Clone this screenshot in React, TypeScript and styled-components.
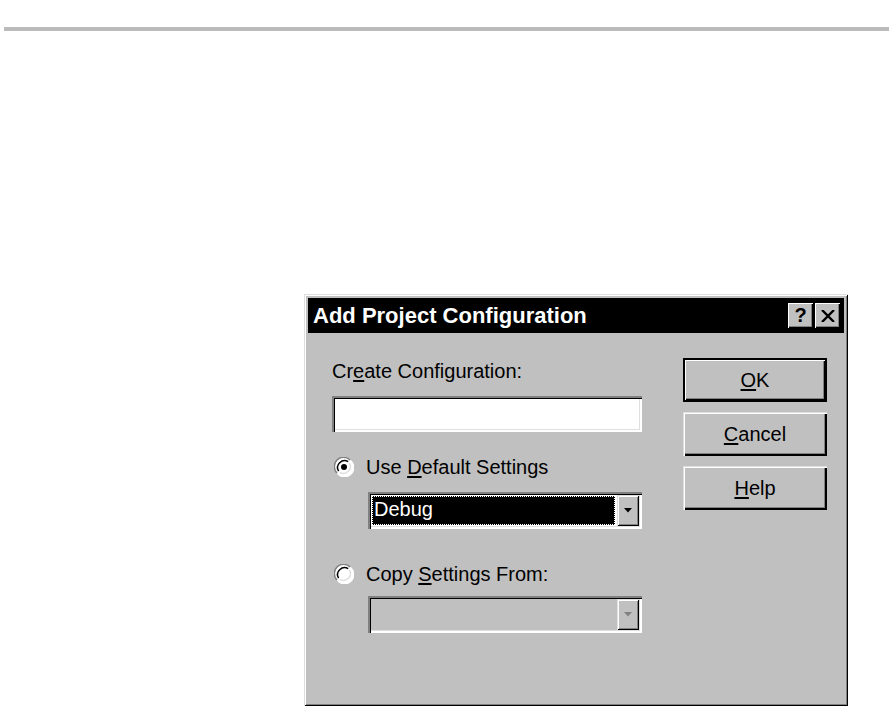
import styled, {createGlobalStyle} from 'styled-components'

const Global = createGlobalStyle`
    html, body {
        margin: 0;
        padding: 0;
        background: #ffffff;
    }
    body {
        font-family: 'Liberation Sans', Arial, sans-serif;
    }
`

const Page = styled.div`
    width: 893px;
    height: 707px;
    overflow: hidden;
    display: flex;
    flex-direction: column;
`

const Rule = styled.div`
    margin: 27px 4px 0 4px;
    height: 4px;
    background: #bbbbbb;
`

const Dialog = styled.div`
    margin: 263px 0 0 304px;
    width: 544px;
    height: 412px;
    box-sizing: border-box;
    background: #c0c0c0;
    padding: 4px;
    display: flex;
    flex-direction: column;
    box-shadow: inset 1px 1px #dfdfdf, inset -1px -1px #000000, inset 2px 2px #ffffff, inset -2px -2px #808080;
`

const TitleBar = styled.div`
    height: 35px;
    background: #000000;
    display: flex;
    align-items: center;
    padding: 0 4px 0 5px;
    gap: 2px;
`

const Title = styled.div`
    flex: 1;
    color: #ffffff;
    font-weight: 700;
    font-size: 22px;
    letter-spacing: 0;
`

const CaptionBtn = styled.div`
    width: 25px;
    height: 25px;
    background: #c0c0c0;
    display: flex;
    align-items: center;
    justify-content: center;
    box-shadow: inset 1px 1px #ffffff, inset -1px -1px #000000, inset -2px -2px #808080;
    font-weight: 700;
    font-size: 20px;
    color: #000;
`

const Body = styled.div`
    flex: 1;
    display: flex;
    padding: 25px 17px 0 24px;
    gap: 41px;
`

const LeftCol = styled.div`
    width: 310px;
    display: flex;
    flex-direction: column;
`

const RightCol = styled.div`
    width: 144px;
    display: flex;
    flex-direction: column;
    gap: 10px;
`

const Label = styled.div<{indent?: number}>`
    font-size: 20px;
    line-height: 22px;
    color: #000;
    margin-left: ${p => p.indent ?? 0}px;
    u {
        text-decoration: underline;
        text-underline-offset: 2px;
    }
`

const TextBox = styled.div`
    margin-top: 14px;
    height: 36px;
    background: #ffffff;
    box-shadow: inset 2px 2px #808080, inset 3px 3px #000000, inset -2px -2px #ffffff, inset -3px -3px #dfdfdf;
`

const RadioRow = styled.div<{top: number}>`
    margin-top: ${p => p.top}px;
    display: flex;
    align-items: center;
    gap: 12px;
    margin-left: 2px;
`

const Combo = styled.div<{disabled?: boolean}>`
    margin-top: ${p => (p.disabled ? 11 : 14)}px;
    margin-left: 36px;
    height: 37px;
    box-sizing: border-box;
    padding: 3px;
    display: flex;
    background: ${p => (p.disabled ? '#c0c0c0' : '#ffffff')};
    box-shadow: inset 2px 2px #808080, inset 3px 3px #000000, inset -2px -2px #ffffff, inset -3px -3px #dfdfdf;
`

const ComboValue = styled.div`
    flex: 1;
    margin: 1px 2px 1px 1px;
    background: #000000;
    color: #ffffff;
    font-size: 20px;
    line-height: 26px;
    padding-left: 2px;
    outline: 1px dotted #ffffff;
    outline-offset: -1px;
`

const ComboEmpty = styled.div`
    flex: 1;
`

const ArrowBtn = styled.div`
    width: 22px;
    background: #c0c0c0;
    display: flex;
    align-items: center;
    justify-content: center;
    box-shadow: inset 1px 1px #dfdfdf, inset -1px -1px #000000, inset 2px 2px #ffffff, inset -2px -2px #808080;
`

const Button = styled.div<{isDefault?: boolean}>`
    height: ${p => (p.isDefault ? 44 : 44)}px;
    background: #c0c0c0;
    display: flex;
    align-items: center;
    justify-content: center;
    font-size: 20px;
    color: #000;
    box-shadow: ${p =>
        p.isDefault
            ? 'inset 0 0 0 2px #000000, inset 3px 3px #ffffff, inset -3px -3px #000000, inset -4px -4px #808080'
            : 'inset 1px 1px #dfdfdf, inset 2px 2px #ffffff, inset -2px -2px #000000, inset -3px -3px #808080'};
    u {
        text-decoration: underline;
        text-underline-offset: 2px;
    }
`

const Radio = ({checked}: {checked?: boolean}) => (
    <svg width="20" height="20" viewBox="0 0 20 20">
        <circle cx="10" cy="10" r="9.5" fill="#ffffff" />
        <path d="M3 16 A9 9 0 0 1 16 3" stroke="#808080" strokeWidth="1.5" fill="none" />
        <path d="M4.6 14.2 A7 7 0 0 1 14.2 4.6" stroke="#000000" strokeWidth="1.5" fill="none" />
        <path d="M17 4 A9 9 0 0 1 4 17" stroke="#ffffff" strokeWidth="1.5" fill="none" />
        <path d="M15.4 5.8 A7 7 0 0 1 5.8 15.4" stroke="#dfdfdf" strokeWidth="1.5" fill="none" />
        {checked && <circle cx="10" cy="10" r="3" fill="#000000" />}
    </svg>
)

const DownArrow = ({color}: {color: string}) => (
    <svg width="8" height="5" viewBox="0 0 8 5">
        <path d="M0 0 H8 L4 4.5 Z" fill={color} />
    </svg>
)

export default function App() {
    return (
        <Page>
            <Global />
            <Rule />
            <Dialog>
                <TitleBar>
                    <Title>Add Project Configuration</Title>
                    <CaptionBtn>?</CaptionBtn>
                    <CaptionBtn>
                        <svg width="14" height="12" viewBox="0 0 14 12">
                            <path d="M1 0 L13 12 M13 0 L1 12" stroke="#000" strokeWidth="2.4" />
                        </svg>
                    </CaptionBtn>
                </TitleBar>
                <Body>
                    <LeftCol>
                        <Label style={{marginTop: 2}}>
                            Cr<u>e</u>ate Configuration:
                        </Label>
                        <TextBox />
                        <RadioRow top={24}>
                            <Radio checked />
                            <Label>
                                Use <u>D</u>efault Settings
                            </Label>
                        </RadioRow>
                        <Combo>
                            <ComboValue>Debug</ComboValue>
                            <ArrowBtn>
                                <DownArrow color="#000000" />
                            </ArrowBtn>
                        </Combo>
                        <RadioRow top={34}>
                            <Radio />
                            <Label>
                                Copy <u>S</u>ettings From:
                            </Label>
                        </RadioRow>
                        <Combo disabled>
                            <ComboEmpty />
                            <ArrowBtn>
                                <DownArrow color="#808080" />
                            </ArrowBtn>
                        </Combo>
                    </LeftCol>
                    <RightCol>
                        <Button isDefault>
                            <span>
                                <u>O</u>K
                            </span>
                        </Button>
                        <Button>
                            <span>
                                <u>C</u>ancel
                            </span>
                        </Button>
                        <Button>
                            <span>
                                <u>H</u>elp
                            </span>
                        </Button>
                    </RightCol>
                </Body>
            </Dialog>
        </Page>
    )
}
